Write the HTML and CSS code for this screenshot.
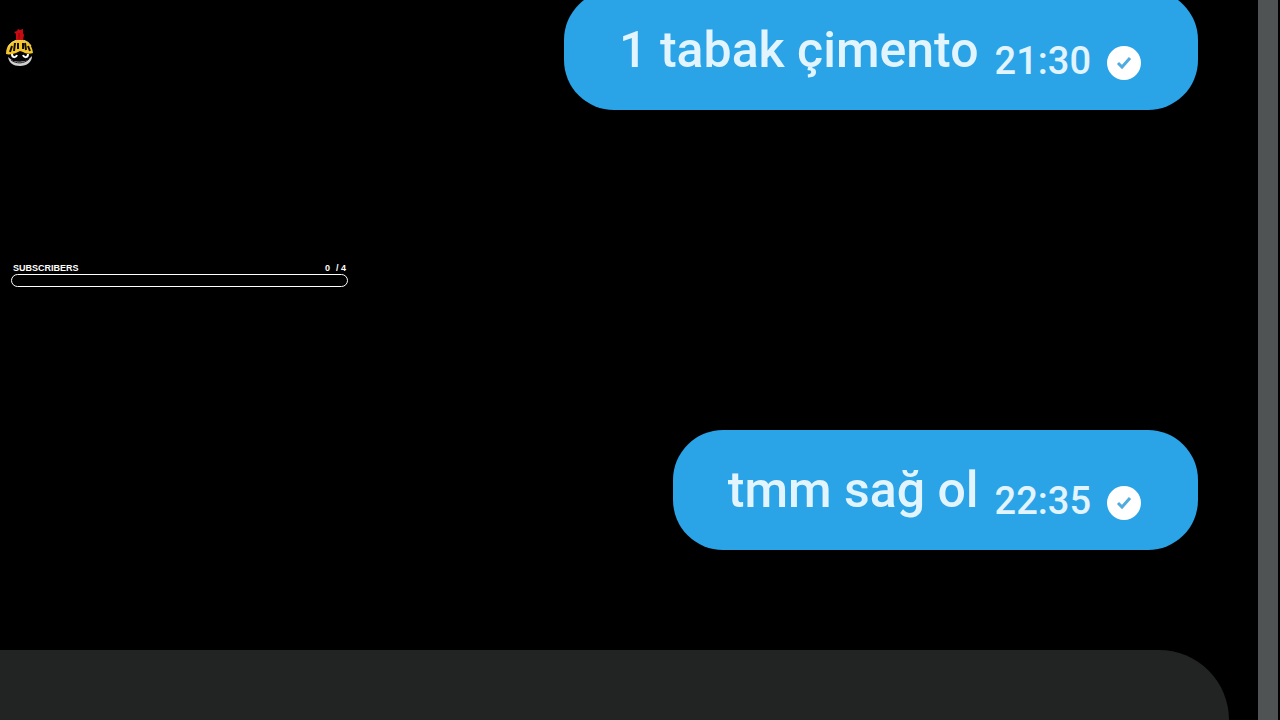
FILE: index.html
```html
<!DOCTYPE html>
<html lang="tr">
    <head>
        <meta charset="utf-8">
        <meta name="viewport" content="width=device-width, initial-scale=1">
        <title>Chat</title>
        <link rel="stylesheet" href="styles.css">
    </head>
    <body>
        <!-- chat window -->
        <main class="chat">
            <div class="stage">
                <!-- stream widgets -->
                <aside class="widgets">
                    <svg class="mascot" viewBox="0 0 30 42" aria-hidden="true">
                        <circle cx="15" cy="26" r="13" fill="#050505"/>
                        <path d="M3 30l5 4c5 1 11 1 15-1l4-4c0 6-5 10-12 10S4 36 3 30z" fill="#d0d0d2"/>
                        <path d="M6 33c5 4 13 4 18-1" fill="none" stroke="#222" stroke-width="1"/>
                        <path d="M7 27c0 4 4 4 5 1M18 28c1 3 5 3 5-1" fill="none" stroke="#fff" stroke-width="2"/>
                        <path d="M1 27C1 17 8 13 15 13s12 4 13 13c-3 1-7 1-10-1l-3-1-4 2c-3 1-7 2-10 1z" fill="#f4c62c"/>
                        <path d="M5 25l2-6M9 24l1-8M13 22v-6M18 22v-6M21 23l-1-7M25 24l-2-5" fill="none" stroke="#120c02" stroke-width="2"/>
                        <path d="M3 20c3-5 7-7 12-7s9 2 11 6" fill="none" stroke="#ffe27a" stroke-width="1"/>
                        <path d="M11 13V7L9 5l3-1 1-2 2 1 3-1v4l1 2-1 5z" fill="#c80a12"/>
                        <path d="M14 12V6" fill="none" stroke="#8b060c" stroke-width="1"/>
                    </svg>
                    <section class="goal">
                        <div class="goal-head">
                            <span id="goal-title">SUBSCRIBERS</span>
                            <span class="goal-count"><span>0</span><span>/ 4</span></span>
                        </div>
                        <div class="goal-bar" role="progressbar" aria-labelledby="goal-title" aria-valuenow="0" aria-valuemin="0" aria-valuemax="4"></div>
                    </section>
                </aside>

                <!-- messages -->
                <div class="messages">
                    <div class="bubble">
                        <span class="text">1 tabak çimento</span>
                        <time class="time">21:30</time>
                        <svg class="check" viewBox="0 0 34 34" aria-hidden="true">
                            <circle cx="17" cy="17" r="17" fill="#fff"/>
                            <path d="M11 17l4 4 8-9" fill="none" stroke="#4fabe0" stroke-width="3"/>
                        </svg>
                    </div>
                    <div class="bubble">
                        <span class="text">tmm sağ ol</span>
                        <time class="time">22:35</time>
                        <svg class="check" viewBox="0 0 34 34" aria-hidden="true">
                            <circle cx="17" cy="17" r="17" fill="#fff"/>
                            <path d="M11 17l4 4 8-9" fill="none" stroke="#4fabe0" stroke-width="3"/>
                        </svg>
                    </div>
                </div>
            </div>
            <div class="composer"></div>
        </main>
        <div class="scrollbar"></div>
    </body>
</html>
```
FILE: styles.css
```css
* {
    box-sizing: border-box;
}

body {
    margin: 0;
    height: 100vh;
    display: flex;
    overflow: hidden;
    background-color: #000;
    color: #fff;
    font-family: Roboto, "Liberation Sans", sans-serif;
}

.chat {
    flex: 1;
    display: flex;
    flex-direction: column;
}

.stage {
    flex: 1;
    min-height: 0;
    display: flex;
}

/* stream widgets on the left */
.widgets {
    width: 348px;
    padding: 27px 0 0 5px;
}

.mascot {
    display: block;
    width: 30px;
    height: 42px;
}

.goal {
    margin: 193px 0 0 6px;
    font: bold 9px/12px "Liberation Sans", Arial, sans-serif;
}

.goal-head {
    display: flex;
    justify-content: space-between;
    padding: 0 2px;
}

.goal-count {
    display: flex;
    gap: 6px;
}

.goal-bar {
    height: 13px;
    border: 1px solid #fff;
    border-radius: 7px;
}

/* messages */
.messages {
    flex: 1;
    display: flex;
    flex-direction: column;
    align-items: flex-end;
    justify-content: flex-end;
    gap: 320px;
    padding: 0 60px 100px 0;
}

.bubble {
    flex-shrink: 0;
    display: flex;
    align-items: flex-start;
    height: 120px;
    padding: 30px 57px 0 55px;
    border-radius: 50px;
    background-color: #2aa3e7;
    color: #e2f4fe;
    font-weight: 500;
    white-space: nowrap;
}

.text {
    font-size: 50px;
    line-height: 60px;
}

.time {
    margin: 19px 0 0 16px;
    font-size: 38px;
    line-height: 44px;
}

.check {
    width: 34px;
    height: 34px;
    margin: 26px 0 0 16px;
}

/* message box at the bottom */
.composer {
    height: 70px;
    margin-right: 29px;
    border-radius: 0 76px 0 0;
    background-color: #212423;
}

.scrollbar {
    width: 20px;
    margin-right: 2px;
    background-color: #4f5353;
}
```
